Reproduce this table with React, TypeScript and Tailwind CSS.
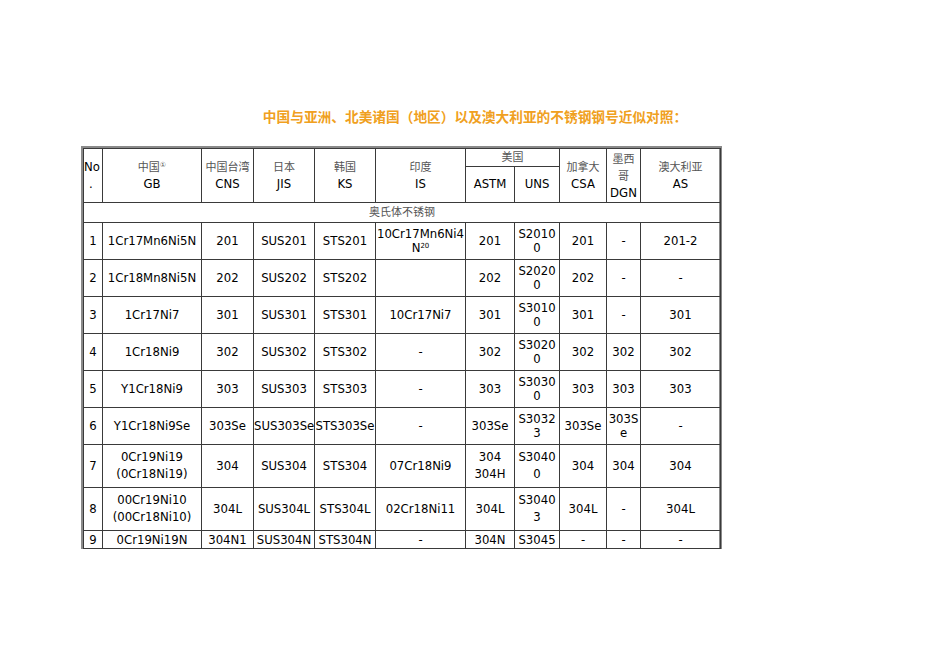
import React from "react";

type Cell = React.ReactNode;

const sup20 = <span className="relative -top-[4px] text-[7px] leading-none">20</span>;

const rows: { h: string; lh: string; cells: Cell[] }[] = [
  { h: "h-[37px]", lh: "leading-[14px]", cells: ["1", "1Cr17Mn6Ni5N", "201", "SUS201", "STS201", <>10Cr17Mn6Ni4<br />N{sup20}</>, "201", <>S2010<br />0</>, "201", "-", "201-2"] },
  { h: "h-[37px]", lh: "leading-[14px]", cells: ["2", "1Cr18Mn8Ni5N", "202", "SUS202", "STS202", "", "202", <>S2020<br />0</>, "202", "-", "-"] },
  { h: "h-[37px]", lh: "leading-[14px]", cells: ["3", "1Cr17Ni7", "301", "SUS301", "STS301", "10Cr17Ni7", "301", <>S3010<br />0</>, "301", "-", "301"] },
  { h: "h-[37px]", lh: "leading-[14px]", cells: ["4", "1Cr18Ni9", "302", "SUS302", "STS302", "-", "302", <>S3020<br />0</>, "302", "302", "302"] },
  { h: "h-[37px]", lh: "leading-[14px]", cells: ["5", "Y1Cr18Ni9", "303", "SUS303", "STS303", "-", "303", <>S3030<br />0</>, "303", "303", "303"] },
  { h: "h-[37px]", lh: "leading-[14px]", cells: ["6", "Y1Cr18Ni9Se", "303Se", "SUS303Se", "STS303Se", "-", "303Se", <>S3032<br />3</>, "303Se", <>303S<br />e</>, "-"] },
  { h: "h-[43px]", lh: "leading-[17px]", cells: ["7", <>0Cr19Ni19<br />(0Cr18Ni19)</>, "304", "SUS304", "STS304", "07Cr18Ni9", <>304<br />304H</>, <>S3040<br />0</>, "304", "304", "304"] },
  { h: "h-[43px]", lh: "leading-[17px]", cells: ["8", <>00Cr19Ni10<br />(00Cr18Ni10)</>, "304L", "SUS304L", "STS304L", "02Cr18Ni11", "304L", <>S3040<br />3</>, "304L", "-", "304L"] },
  { h: "h-[18px]", lh: "leading-[14px]", cells: ["9", "0Cr19Ni19N", "304N1", "SUS304N", "STS304N", "-", "304N", "S3045", "-", "-", "-"] },
];

const widths = [19, 99, 52, 61, 61, 90, 49, 45, 47, 34, 80];

const td = "border border-[#3a3a3a] p-0 text-center align-middle whitespace-nowrap overflow-visible";
const cjk = "text-[11px] text-[#555]";

export default function App() {
  return (
    <div
      className="w-[950px] h-[672px] bg-white text-black"
      style={{ fontFamily: '"DejaVu Sans", "Noto Sans CJK SC", sans-serif' }}
    >
      <div className="pt-[108px] text-center text-[13.7px] font-bold leading-[18px] text-[#f0a020]">
        中国与亚洲、北美诸国（地区）以及澳大利亚的不锈钢钢号近似对照：
      </div>
      <div className="mt-[20px] ml-[81px] w-[641px] border-l-2 border-t-2 border-r-[3px] border-[#8a8a8a]">
        <table className="table-fixed border-collapse text-[11.7px] w-[637px]">
          <colgroup>
            {widths.map((w, i) => (
              <col key={i} style={{ width: w }} />
            ))}
          </colgroup>
          <tbody>
            <tr className="h-[18px] leading-[17px]">
              <td rowSpan={2} className={`${td} text-left`}>
                No<br />
                <span className="pl-[5px]">.</span>
              </td>
              <td rowSpan={2} className={td}>
                <span className={cjk}>中国<span className="relative -top-[4px] text-[7px] leading-none">①</span></span>
                <br />GB
              </td>
              <td rowSpan={2} className={td}>
                <span className={cjk}>中国台湾</span>
                <br />CNS
              </td>
              <td rowSpan={2} className={td}>
                <span className={cjk}>日本</span>
                <br />JIS
              </td>
              <td rowSpan={2} className={td}>
                <span className={cjk}>韩国</span>
                <br />KS
              </td>
              <td rowSpan={2} className={td}>
                <span className={cjk}>印度</span>
                <br />IS
              </td>
              <td colSpan={2} className={`${td} ${cjk}`}>美国</td>
              <td rowSpan={2} className={td}>
                <span className={cjk}>加拿大</span>
                <br />CSA
              </td>
              <td rowSpan={2} className={`${td} leading-[16px]`}>
                <span className={cjk}>墨西<br />哥</span>
                <br />DGN
              </td>
              <td rowSpan={2} className={td}>
                <span className={cjk}>澳大利亚</span>
                <br />AS
              </td>
            </tr>
            <tr className="h-[36px]">
              <td className={td}>ASTM</td>
              <td className={td}>UNS</td>
            </tr>
            <tr className="h-[20px]">
              <td colSpan={11} className={`${td} ${cjk} leading-[18px]`}>奥氏体不锈钢</td>
            </tr>
            {rows.map((r, ri) => (
              <tr key={ri} className={`${r.h} ${r.lh}`}>
                {r.cells.map((c, ci) => (
                  <td key={ci} className={td}>
                    {c}
                  </td>
                ))}
              </tr>
            ))}
          </tbody>
        </table>
      </div>
    </div>
  );
}
